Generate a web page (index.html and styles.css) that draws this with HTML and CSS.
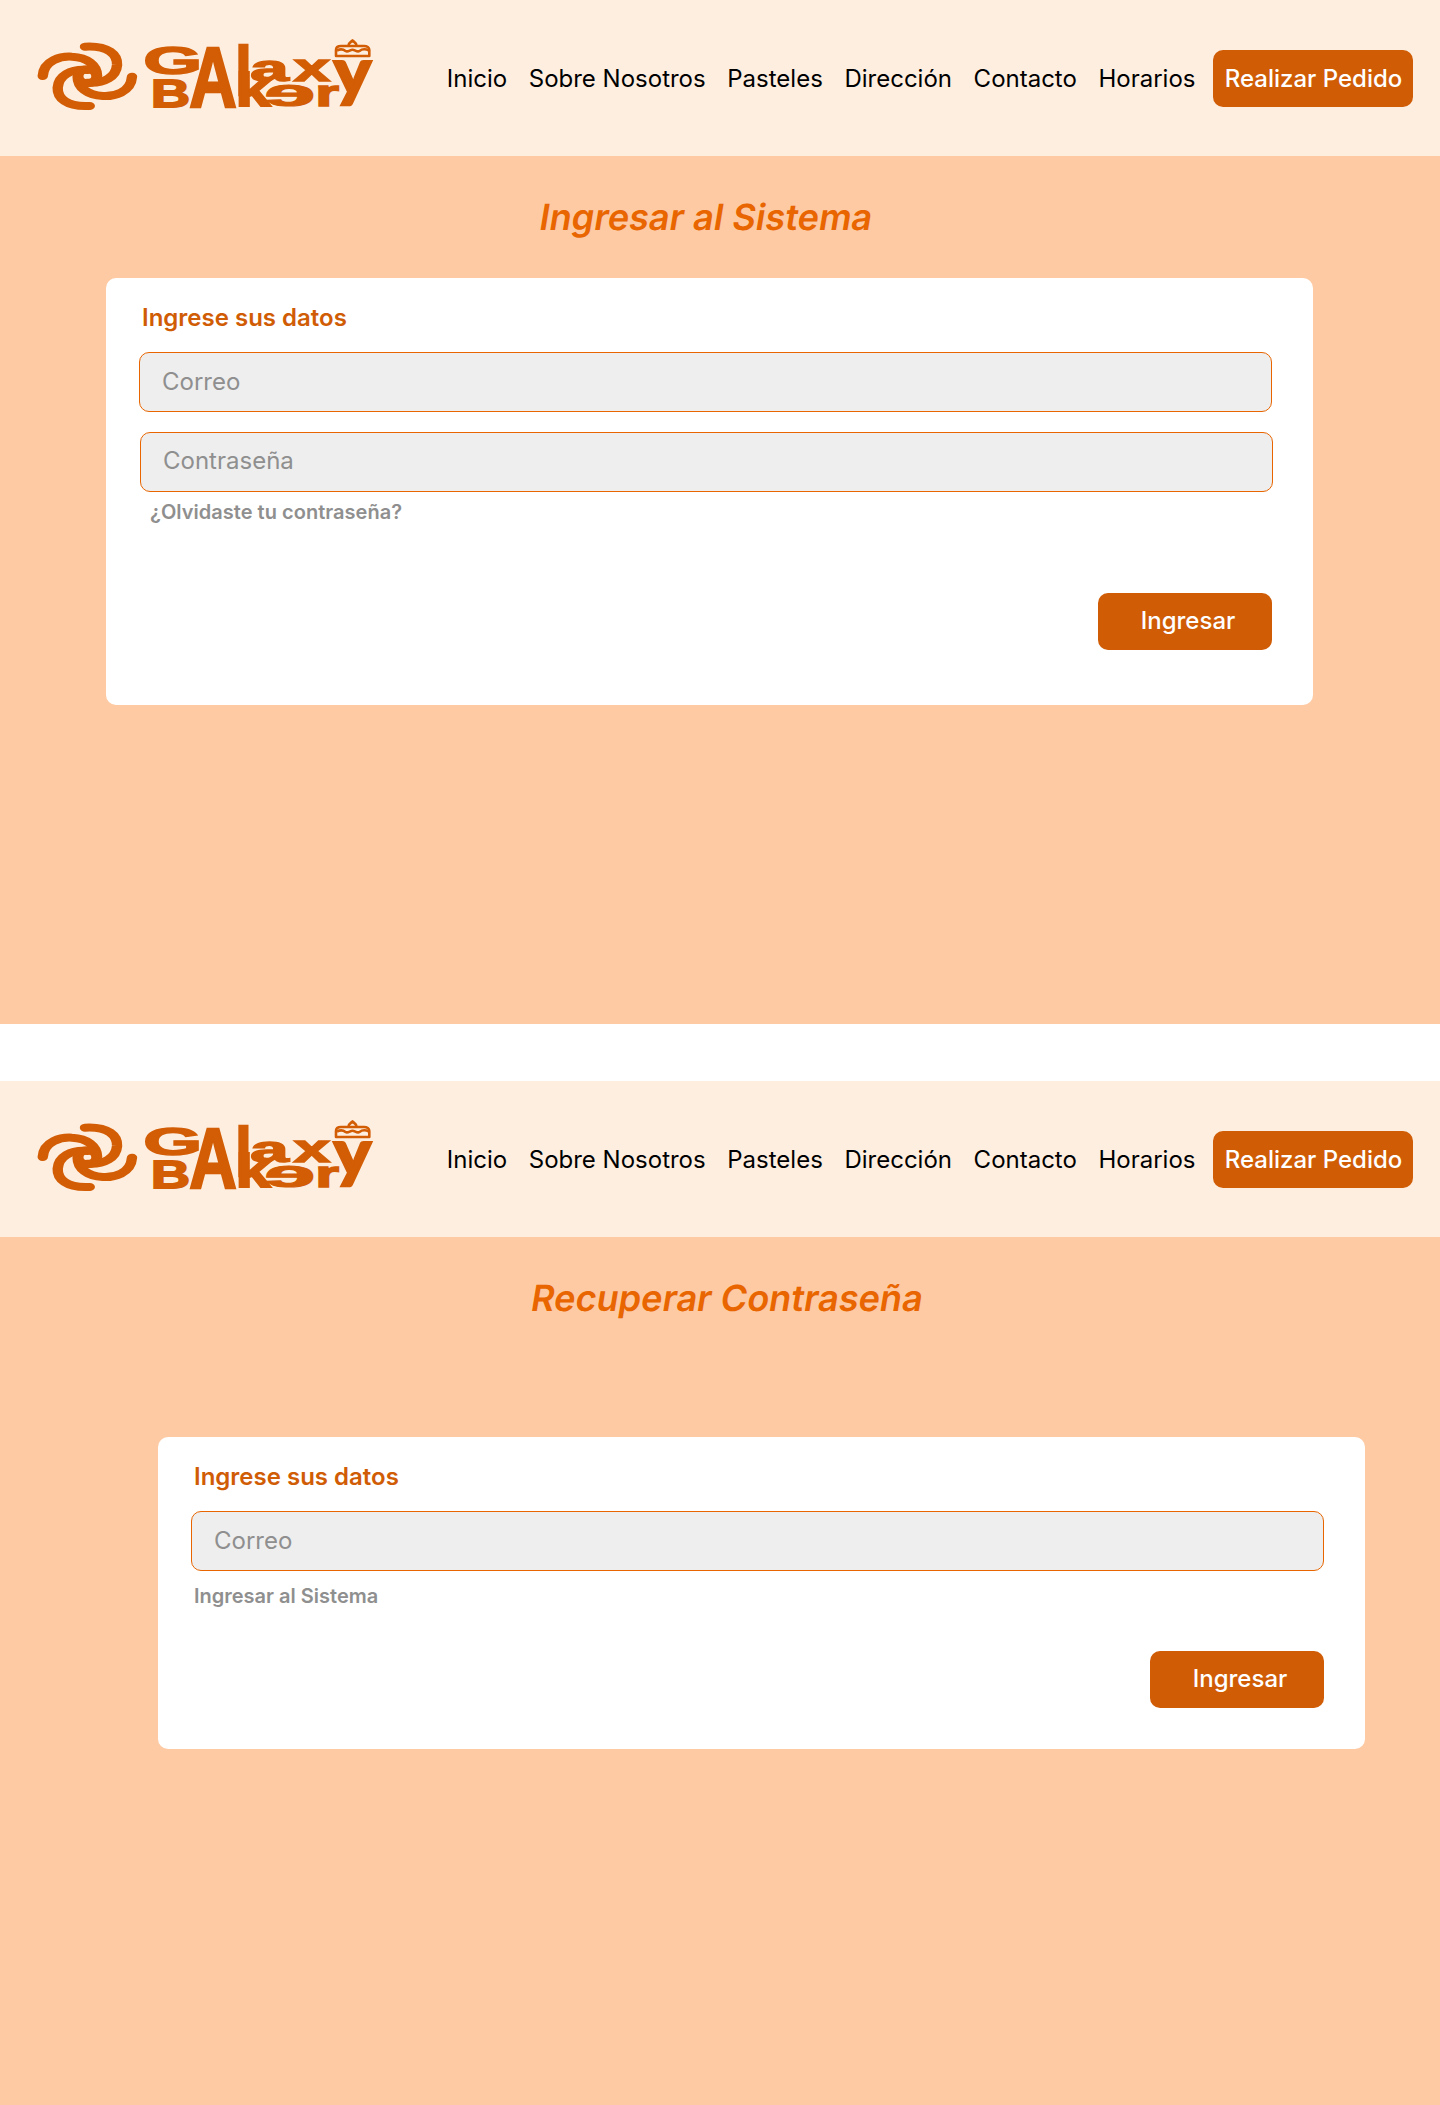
FILE: index.html
```html
<!DOCTYPE html>
<html lang="es">
<head>
<meta charset="utf-8">
<title>Galaxy Bakery</title>
<link rel="stylesheet" href="styles.css">
</head>
<body>
<svg class="defs" width="0" height="0" aria-hidden="true">
  <symbol id="logo" viewBox="0 0 350 80">
    <g transform="translate(-30 -35)">
      <g class="swirl" transform="translate(20 20) scale(.4333 .3333)">
        <path d="M150 80C205 76 225 105 224 135C222 170 195 192 155 188"/>
        <path d="M161 258C106 262 86 233 87 203C89 168 116 146 156 150"/>
        <path d="M52.500 168C55 120 95 108 120 110C155 112 178 135 178 168"/>
        <path d="M258.500 170C256 218 216 230 191 228C156 226 133 203 133 170"/>
        <circle cx="155.500" cy="169" r="21"/>
      </g>
      <g class="wordmark">
        <text transform="translate(143.200 74.300) scale(.757 .385)">G</text>
        <text transform="translate(151 107) scale(.54 .395)">B</text>
        <text transform="translate(189.300 107) scale(.658 .845)">A</text>
        <text transform="translate(235.200 95) scale(.59 .685)">l</text>
        <text transform="translate(235.500 106.300) scale(.63 .461)">k</text>
        <text transform="translate(250.300 81) scale(.69 .368)">a</text>
        <text transform="translate(293.800 81) scale(.65 .38)">x</text>
        <text transform="translate(315.500 106) scale(-.92 .388)">e</text>
        <text transform="translate(315.500 106) scale(.6 .37)">r</text>
        <text class="tail" transform="translate(333.500 94.300) scale(.71 .645)">y</text>
      </g>
      <g class="cake">
        <path d="M336 56V50C336 47.500 338 46 341 46H364C367 46 369.300 47.500 369.300 50V56Z"/>
        <path d="M337 50.500C341 48.500 343 49 345.500 51C348 52.500 350 49.800 352.500 49.800C355 49.800 357 52.500 359.500 51C362 49 365 48.500 369 50.500"/>
        <path d="M348.500 45.500C348.500 43 351 42 352.500 40.500C354 42 356.500 43 356.500 45.500"/>
      </g>
    </g>
  </symbol>
</svg>

<section class="screen">
  <header class="header">
    <svg class="logo" role="img" aria-label="Galaxy Bakery"><use href="#logo"/></svg>
    <nav class="nav">
      <a>Inicio</a><a>Sobre Nosotros</a><a>Pasteles</a><a>Dirección</a><a>Contacto</a><a>Horarios</a>
    </nav>
    <button class="button order">Realizar Pedido</button>
  </header>
  <h1 class="title title-login">Ingresar al Sistema</h1>
  <form class="card card-login">
    <h2 class="card-title">Ingrese sus datos</h2>
    <input class="field" type="email" placeholder="Correo">
    <input class="field field-password" type="password" placeholder="Contraseña">
    <a class="link link-forgot">¿Olvidaste tu contraseña?</a>
    <button class="button submit" type="button">Ingresar</button>
  </form>
</section>

<section class="screen">
  <header class="header">
    <svg class="logo" role="img" aria-label="Galaxy Bakery"><use href="#logo"/></svg>
    <nav class="nav">
      <a>Inicio</a><a>Sobre Nosotros</a><a>Pasteles</a><a>Dirección</a><a>Contacto</a><a>Horarios</a>
    </nav>
    <button class="button order">Realizar Pedido</button>
  </header>
  <h1 class="title title-recover">Recuperar Contraseña</h1>
  <form class="card card-recover">
    <h2 class="card-title">Ingrese sus datos</h2>
    <input class="field" type="email" placeholder="Correo">
    <a class="link link-login">Ingresar al Sistema</a>
    <button class="button submit" type="button">Ingresar</button>
  </form>
</section>
</body>
</html>
```
FILE: styles.css
```css
* { box-sizing: border-box; }

body {
  margin: 0;
  background: #fff;
  color: #000;
  font: 400 24px/29px Inter, sans-serif;
  display: flex;
  flex-direction: column;
  gap: 57px;
}

.defs { position: absolute; }

.screen {
  width: 1440px;
  height: 1024px;
  background: #fecaa4;
}

.header {
  height: 156px;
  padding: 35px 27px 0 30px;
  background: #fdeee0;
  display: flex;
  align-items: flex-start;
}

.logo { width: 350px; height: 80px; flex: none; }

.nav {
  margin: 29px 17.500px 0 auto;
  display: flex;
  gap: 21.600px;
  white-space: nowrap;
}

.swirl { fill: none; stroke: #d25d05; stroke-width: 24; stroke-linecap: round; }
.wordmark {
  fill: #d25d05;
  stroke: #d25d05;
  stroke-width: 2.200px;
  font: 700 100px "Liberation Sans", Arial, sans-serif;
}
.wordmark text { vector-effect: non-scaling-stroke; }
.wordmark .tail { font-family: Lato, sans-serif; font-weight: 900; }
.cake { fill: none; stroke: #d25d05; stroke-width: 2.600; stroke-linejoin: round; }

.button {
  height: 57px;
  padding: 0;
  border: 0;
  border-radius: 10px;
  background: #d05c05;
  color: #fff;
  font: 500 24px/29px Inter, sans-serif;
}

.order { width: 200px; margin-top: 15px; padding-left: 1px; flex: none; }

/* The slant pivots on the text baseline. */
.title {
  margin: 0;
  padding-top: 39px;
  color: #e86500;
  font: 600 36px/44px Inter, sans-serif;
  letter-spacing: .05px;
  transform: skewX(-9.400deg);
  transform-origin: 0 74px;
}

.title-login { padding-left: 538px; }
.title-recover { padding-left: 529.500px; }

.card {
  width: 1207px;
  padding: 25px 41px 0 33px;
  border-radius: 10px;
  background: #fff;
  display: flex;
  flex-direction: column;
  align-items: flex-start;
}

.card-login { height: 427px; margin: 39px 0 0 106px; }
.card-recover { height: 312px; margin: 117px 0 0 158px; }

.card-title {
  margin: 0 0 20px 3px;
  color: #d05c05;
  font: 600 24px/29px Inter, sans-serif;
}

.field {
  width: 1133px;
  height: 60px;
  padding: 0 22px 2px;
  border: 1px solid #e86500;
  border-radius: 10px;
  background: #eee;
  font: 400 24px/29px Inter, sans-serif;
}

.field::placeholder { color: #8f8f8f; opacity: 1; }

.field-password { margin: 20px 0 0 1px; padding-bottom: 4px; }

.link {
  color: #8f8f8f;
  font: 600 20px/24px Inter, sans-serif;
}

.link-forgot { margin: 8px 0 0 11px; letter-spacing: .03px; }
.link-login { margin: 13px 0 0 3px; }

.submit {
  width: 174px;
  padding: 0 0 2px 6px;
  align-self: flex-end;
}

.link-forgot + .submit { margin-top: 69px; }
.link-login + .submit { margin-top: 43px; }
```
